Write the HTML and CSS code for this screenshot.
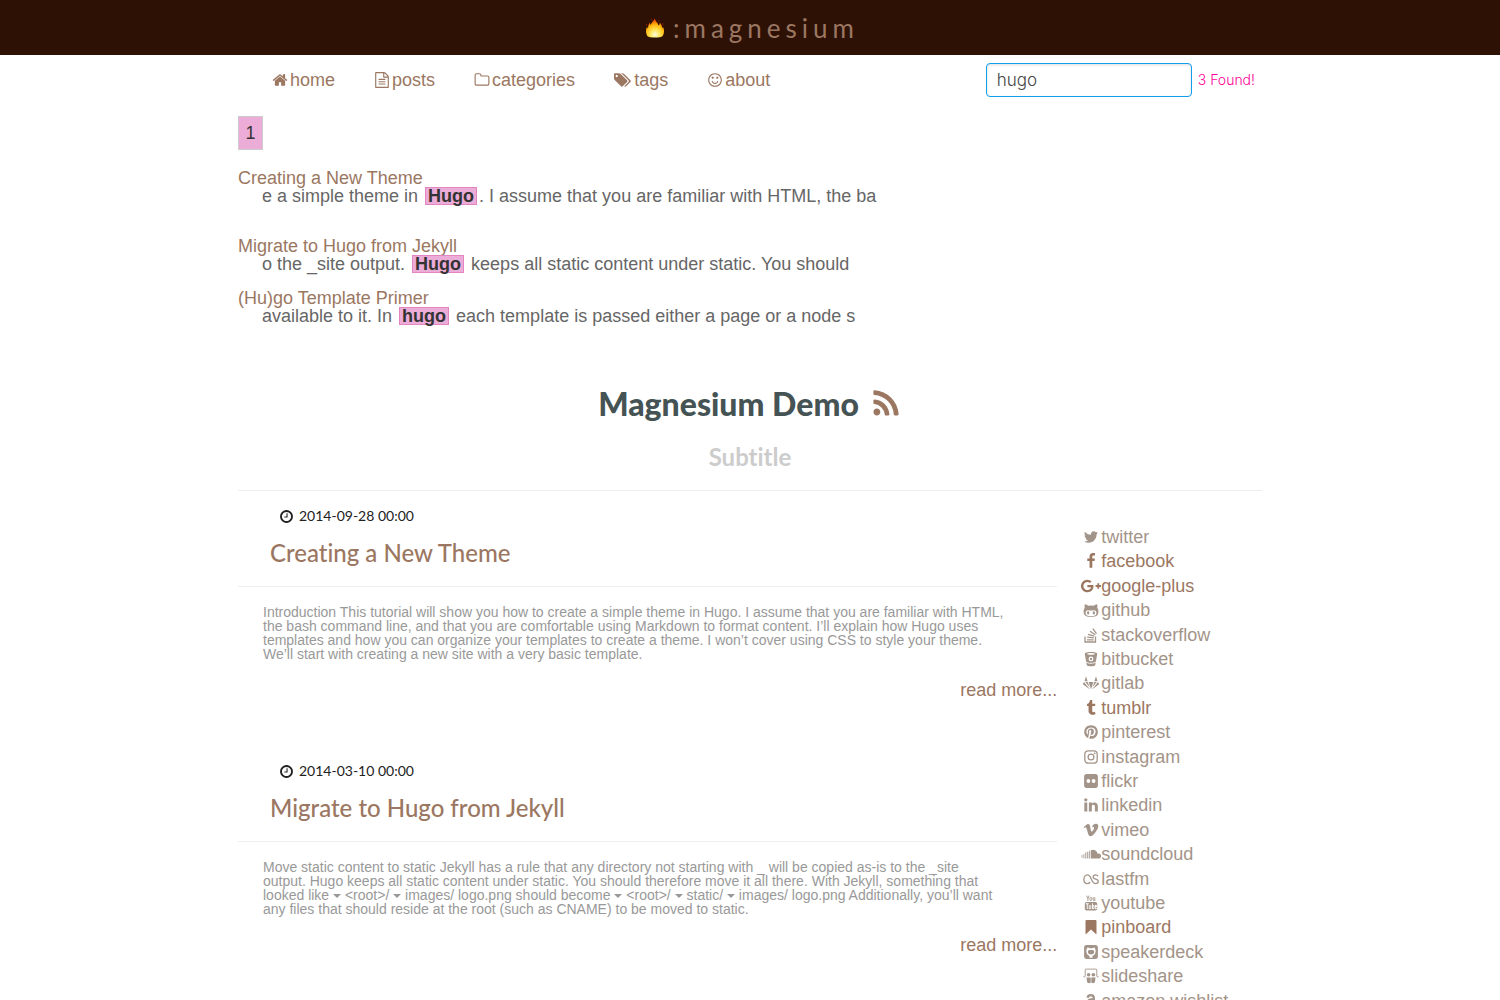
FILE: index.html
```html
<!DOCTYPE html>
<html lang="en">
<head>
<meta charset="utf-8">
<meta name="viewport" content="width=device-width, initial-scale=1">
<title>Magnesium Demo</title>
<link rel="stylesheet" href="styles.css">
</head>
<body>
<svg class="sprite" aria-hidden="true">
  <defs>
    <radialGradient id="flame-fill" cx=".5" cy=".85" r=".8">
      <stop offset="0" stop-color="#fffbe0"/><stop offset=".3" stop-color="#ffe860"/><stop offset=".65" stop-color="#ffb80a"/><stop offset="1" stop-color="#e83a00"/>
    </radialGradient>
    <symbol id="home" viewBox="0 0 1792 1792"><path d="M1472 992v480q0 26-19 45t-45 19h-384v-384h-256v384h-384q-26 0-45-19t-19-45v-480q0-1 .5-3t.5-3l575-474 575 474q1 2 1 6zm223-69l-62 74q-8 9-21 11h-3q-13 0-21-7l-692-577-692 577q-12 8-24 7-13-2-21-11l-62-74q-8-10-7-23.5t11-21.5l719-599q32-26 76-26t76 26l244 204v-195q0-14 9-23t23-9h192q14 0 23 9t9 23v408l219 182q10 8 11 21.5t-7 23.5z"/></symbol>
    <symbol id="file" viewBox="0 0 1792 1792"><path d="M1596 380q28 28 48 76t20 88v1152q0 40-28 68t-68 28h-1344q-40 0-68-28t-28-68v-1600q0-40 28-68t68-28h896q40 0 88 20t76 48zm-444-244v376h376q-10-29-22-41l-313-313q-12-12-41-22zm384 1528v-1024h-416q-40 0-68-28t-28-68v-416h-768v1536h1280zm-1024-864q0-14 9-23t23-9h704q14 0 23 9t9 23v64q0 14-9 23t-23 9h-704q-14 0-23-9t-9-23v-64zm736 224q14 0 23 9t9 23v64q0 14-9 23t-23 9h-704q-14 0-23-9t-9-23v-64q0-14 9-23t23-9h704zm0 256q14 0 23 9t9 23v64q0 14-9 23t-23 9h-704q-14 0-23-9t-9-23v-64q0-14 9-23t23-9h704z"/></symbol>
    <symbol id="folder" viewBox="0 0 1792 1792"><path d="M1600 1312v-704q0-40-28-68t-68-28h-704q-40 0-68-28t-28-68v-64q0-40-28-68t-68-28h-320q-40 0-68 28t-28 68v960q0 40 28 68t68 28h1216q40 0 68-28t28-68zm128-704v704q0 92-66 158t-158 66h-1216q-92 0-158-66t-66-158v-960q0-92 66-158t158-66h320q92 0 158 66t66 158v32h672q92 0 158 66t66 158z"/></symbol>
    <symbol id="tags" viewBox="0 0 1920 1792"><path d="M384 448q0-53-37.500-90.500t-90.500-37.500-90.500 37.500-37.500 90.500 37.500 90.500 90.500 37.500 90.500-37.500 37.500-90.500zm1067 576q0 53-37 90l-491 492q-39 37-91 37-53 0-90-37l-715-716q-38-37-64.500-101t-26.500-117v-416q0-52 38-90t90-38h416q53 0 117 26.500t102 64.500l715 714q37 39 37 91zm384 0q0 53-37 90l-491 492q-39 37-91 37-36 0-59-14t-53-45l470-470q37-37 37-90 0-52-37-91l-715-714q-38-38-102-64.500t-117-26.500h224q53 0 117 26.500t102 64.500l715 714q37 39 37 91z"/></symbol>
    <symbol id="smile" viewBox="0 0 1792 1792"><path d="M1262 1075q-37 121-138 195t-228 74-228-74-138-195q-8-25 4-48.500t38-31.500q25-8 48.500 4t31.500 38q25 80 92.500 129.500t151.500 49.500 151.500-49.500 92.500-129.500q8-26 32-38t49-4 37 31.500 4 48.500zm-494-435q0 53-37.500 90.500t-90.500 37.500-90.500-37.500-37.500-90.500 37.500-90.500 90.500-37.500 90.500 37.500 37.500 90.500zm512 0q0 53-37.500 90.500t-90.500 37.500-90.500-37.500-37.500-90.500 37.500-90.500 90.500-37.500 90.500 37.500 37.500 90.500zm256 256q0-130-51-248.500t-136.500-204-204-136.500-248.500-51-248.500 51-204 136.500-136.500 204-51 248.500 51 248.500 136.500 204 204 136.500 248.500 51 248.500-51 204-136.500 136.500-204 51-248.500zm128 0q0 209-103 385.500t-279.500 279.500-385.500 103-385.500-103-279.500-279.500-103-385.500 103-385.500 279.500-279.500 385.500-103 385.500 103 279.500 279.500 103 385.500z"/></symbol>
    <symbol id="rss" viewBox="0 0 1792 1792"><path d="M576 1344q0 80-56 136t-136 56-136-56-56-136 56-136 136-56 136 56 56 136zm512 123q2 28-17 48-18 21-47 21h-135q-25 0-43-16.500t-20-41.500q-22-229-184.500-391.500t-391.500-184.500q-25-2-41.500-20t-16.500-43v-135q0-29 21-47 17-17 43-17h5q160 13 306 80.500t259 181.500q114 113 181.500 259t80.500 306zm512 2q2 27-18 47-18 20-46 20h-143q-26 0-44.500-17.500t-19.500-42.500q-12-215-101-408.500t-231.500-336-336-231.500-408.500-102q-25-1-42.500-19.500t-17.500-43.500v-143q0-28 20-46 18-18 44-18h3q262 13 501.500 120t425.500 294q187 186 294 425.500t120 501.500z"/></symbol>
    <symbol id="clock" viewBox="0 0 1792 1792"><path d="M1024 544v448q0 14-9 23t-23 9h-320q-14 0-23-9t-9-23v-64q0-14 9-23t23-9h224v-352q0-14 9-23t23-9h64q14 0 23 9t9 23zm416 352q0-148-73-273t-198-198-273-73-273 73-198 198-73 273 73 273 198 198 273 73 273-73 198-198 73-273zm224 0q0 209-103 385.500t-279.500 279.500-385.500 103-385.500-103-279.500-279.500-103-385.500 103-385.500 279.500-279.500 385.500-103 385.500 103 279.500 279.500 103 385.500z"/></symbol>
    <symbol id="caret" viewBox="0 0 8 8"><path d="M0 2h8L4 6z"/></symbol>
    <symbol id="twitter" viewBox="0 0 1792 1792"><path d="M1684 408q-67 98-162 167 1 14 1 42 0 130-38 259.500t-115.500 248.500-184.500 210.500-258 146-323 54.500q-271 0-496-145 35 4 78 4 225 0 401-138-105-2-188-64.500t-114-159.500q33 5 61 5 43 0 85-11-112-23-185.500-111.500t-73.500-205.500v-4q68 38 146 41-66-44-105-115t-39-154q0-88 44-163 121 149 294.500 238.500t371.500 99.500q-8-38-8-74 0-134 94.500-228.500t228.500-94.500q140 0 236 102 109-21 205-78-37 115-142 178 93-10 186-50z"/></symbol>
    <symbol id="facebook" viewBox="0 0 1792 1792"><path d="M1343 12v264h-157q-86 0-116 36t-30 108v189h293l-39 296h-254v759h-306v-759h-255v-296h255v-218q0-186 104-288.500t277-102.500q147 0 228 12z"/></symbol>
    <symbol id="gplus" viewBox="0 0 2304 1792"><path d="M1437 913q0 208-87 370.500t-248 254-369 91.500q-149 0-285-58t-234-156-156-234-58-285 58-285 156-234 234-156 285-58q286 0 491 192l-199 191q-117-113-292-113-123 0-227.500 62t-165.500 168.500-61 232.500 61 232.500 165.500 168.500 227.500 62q83 0 152.500-23t114.500-57.500 78.500-78.500 49-83 21.500-74h-416v-252h692q12 63 12 122zm867-122v210h-209v209h-210v-209h-209v-210h209v-209h210v209h209z"/></symbol>
    <symbol id="github" viewBox="0 0 1792 1792"><path d="M704 1216q0 40-12.500 82t-43 76-72.500 34-72.500-34-43-76-12.500-82 12.500-82 43-76 72.500-34 72.500 34 43 76 12.500 82zm640 0q0 40-12.500 82t-43 76-72.500 34-72.500-34-43-76-12.500-82 12.500-82 43-76 72.500-34 72.500 34 43 76 12.500 82zm160 0q0-120-69-204t-187-84q-41 0-195 21-71 11-157 11t-157-11q-152-21-195-21-118 0-187 84t-69 204q0 88 32 153.500t81 103 122 60 140 29.500 149 7h168q82 0 149-7t140-29.500 122-60 81-103 32-153.500zm224-176q0 207-61 331-38 77-105.500 133t-141 86-170 47.500-171.500 22-167 4.500q-78 0-142-3t-147.500-12.500-152.500-30-137-51.500-121-81-86-115q-62-123-62-331 0-237 136-396-27-82-27-170 0-116 51-218 108 0 190 39.500t189 123.500q147-35 309-35 148 0 280 32 105-82 187-121t189-39q51 102 51 218 0 87-27 168 136 160 136 398z"/></symbol>
    <symbol id="stack" viewBox="0 0 16 16"><path fill="none" stroke="currentColor" stroke-width="1.300" d="M2 9.500V15h10.500V9.500M4 12.800h6.600M4.200 10.200l6.500.7M5 7.300l6.200 1.900M7 4.300l5.300 3.400M9.800 1.600l3.700 5"/></symbol>
    <symbol id="bitbucket" viewBox="0 0 16 16"><path fill-rule="evenodd" d="M8 1c3.500 0 6.200.7 6.200 1.700L13 10.300c-.7 1-2.600 1.500-5 1.500s-4.300-.5-5-1.500L1.800 2.700C1.800 1.700 4.500 1 8 1zm0 1.100c-2 0-4 .3-4 .8s2 .8 4 .8 4-.3 4-.8-2-.8-4-.8zm0 3.400a2.400 2.400 0 1 0 0 4.800 2.400 2.400 0 0 0 0-4.800zm0 1.200a1.200 1.200 0 1 1 0 2.400 1.200 1.200 0 0 1 0-2.400zM3.200 11.600c1.200.8 2.900 1.200 4.800 1.200s3.600-.4 4.800-1.200l-.6 2.600c-.7.700-2.200 1.100-4.200 1.100s-3.500-.4-4.200-1.100z"/></symbol>
    <symbol id="gitlab" viewBox="0 0 16 16"><path d="M3 1.200 4.600 6.200H1.500zM13 1.200l1.500 5h-3.100zM1 6.900 7 14.600.2 9.600q-.4-.4-.2-.9zM15 6.900 9 14.600l6.800-5q.4-.4.2-.9zM2.300 6.900h2.400L6.500 12.200zM13.700 6.900h-2.400L9.500 12.200zM5.600 6.900h4.800L8 14.300z"/></symbol>
    <symbol id="tumblr" viewBox="0 0 1792 1792"><path d="M1328 1329l80 237q-23 35-111 66t-177 32q-104 2-190.500-26t-142.500-74-95-106-55.500-120-16.500-118v-544h-168v-215q72-26 129-69.500t91-90 58-102 34-99 15-88.500q1-5 4.500-8.500t7.500-3.500h244v424h333v252h-334v518q0 30 6.500 56t22.500 52.500 49.500 41.500 81.500 14q78-2 134-29z"/></symbol>
    <symbol id="pinterest" viewBox="0 0 1792 1792"><path d="M1664 896q0 209-103 385.500t-279.500 279.500-385.500 103q-111 0-218-32 59-93 78-164 9-34 54-211 20 39 73 67.500t114 28.500q121 0 216-68.500t147-188.500 52-270q0-114-59.500-214t-172.500-163-255-63q-105 0-196 29t-154.500 77-109 110.500-67 129.500-21.500 134q0 104 40 183t117 111q30 12 38-20 2-7 8-31t8-30q6-23-11-43-51-61-51-151 0-151 104.500-259.500t273.500-108.500q151 0 235.500 82t84.500 213q0 170-68.500 289t-175.500 119q-61 0-98-43.500t-23-104.500q8-35 26.500-93.500t30-103 11.500-75.500q0-50-27-83t-77-33q-62 0-105 57t-43 142q0 73 25 122l-99 418q-17 70-13 177-206-91-333-281t-127-423q0-209 103-385.500t279.500-279.500 385.500-103 385.500 103 279.500 279.500 103 385.500z"/></symbol>
    <symbol id="instagram" viewBox="0 0 16 16"><rect x="1.800" y="1.800" width="12.400" height="12.400" rx="3.400" fill="none" stroke="currentColor" stroke-width="1.300"/><circle cx="8" cy="8" r="2.900" fill="none" stroke="currentColor" stroke-width="1.300"/><circle cx="11.700" cy="4.300" r=".9"/></symbol>
    <symbol id="flickr" viewBox="0 0 16 16"><path fill-rule="evenodd" d="M3.700 1.100h8.600a2.600 2.600 0 0 1 2.600 2.600v8.600a2.600 2.600 0 0 1-2.600 2.600H3.700a2.600 2.600 0 0 1-2.600-2.600V3.700a2.600 2.600 0 0 1 2.600-2.600zM5.400 6.100a1.900 1.900 0 1 0 0 3.800 1.900 1.900 0 0 0 0-3.800zm5.200 0a1.900 1.900 0 1 0 0 3.800 1.900 1.900 0 0 0 0-3.800z"/></symbol>
    <symbol id="linkedin" viewBox="0 0 1792 1792"><path d="M477 625v991h-330v-991h330zm21-306q1 73-50.500 122t-135.500 49h-2q-82 0-132-49t-50-122q0-74 51.500-122.500t134.500-48.500 133 48.500 51 122.500zm1166 729v568h-329v-530q0-105-40.500-164.500t-126.500-59.500q-63 0-105.500 34.500t-63.500 85.500q-11 30-11 81v553h-329q2-399 2-647t-1-296l-1-48h329v144h-2q20-32 41-56t56.500-52 87-43.500 114.500-15.500q171 0 275 113.500t104 332.500z"/></symbol>
    <symbol id="vimeo" viewBox="0 0 1792 1792"><path d="M1709 518q-10 236-332 651-333 431-562 431-142 0-240-263-44-160-132-482-72-262-157-262-18 0-127 76l-77-98q24-21 108-96.500t130-115.500q156-138 241-146 95-9 153 55.500t81 203.500q44 287 66 373 55 249 120 249 51 0 154-161 101-161 109-246 13-139-109-139-57 0-121 26 120-393 459-382 251 8 236 326z"/></symbol>
    <symbol id="soundcloud" viewBox="0 0 20 16"><path d="M10 4.300a4.600 4.600 0 0 1 6.600 3.400 2.500 2.500 0 1 1 .9 4.800H10z"/><path opacity=".75" d="M6 5.900q.5-.8 1.400 0v6.600H6zM8 4.900q.6-.8 1.400 0v7.600H8zM4.100 6.600q.5-.8 1.300 0v5.900H4.100z"/><path opacity=".6" d="M2.200 8.200q.5-.8 1.300 0v4.200H2.200zM.4 9.100q.5-.6 1.200 0v2.700q-.6.600-1.200 0z"/></symbol>
    <symbol id="lastfm" viewBox="0 0 16 16"><path fill="none" stroke="currentColor" stroke-width="1.300" d="M7.200 11.300C6.500 12.100 5.500 12.600 4.300 12.600 2.200 12.600.9 11 .9 8.500s1.500-4.600 3.600-4.600c4.100 0 3.700 8.700 8 8.700 1.700 0 2.800-.9 2.800-2.300 0-3.200-5.200-1.300-5.200-4.300 0-1.300 1-2.200 2.400-2.200 1.300 0 2 .5 2.500 1.500"/></symbol>
    <symbol id="youtube" viewBox="0 0 16 16"><path fill-rule="evenodd" d="M3.500 7h9a1.700 1.700 0 0 1 1.700 1.700v5a1.700 1.700 0 0 1-1.700 1.700h-9a1.700 1.700 0 0 1-1.700-1.700v-5A1.700 1.700 0 0 1 3.500 7zM2.800 8.300v.9h1v4.900h.9V9.200h1v-.9zm3 1.600v3.500q0 .8.800.8.500 0 .8-.4v.3h.8V9.900h-.8v3.400q-.7.500-.8 0V9.900zM9 8.300v5.800h.7l.1-.3q1.600.9 1.600-.7v-2q0-1.700-1.600-.9V8.300zm.9 2.600q.6-.4.600.3v1.700q0 .7-.6.300zm2 .1v2q0 1.300 1 1.300t1-1.500h-.7q0 .7-.3.7t-.2-1.400h1.200V11q0-1.200-1-1.200t-1 1.200z"/><path fill="none" stroke="currentColor" stroke-width=".9" d="m3.600.6 1.300 3 1.200-3M4.900 3.600V6M7.800 2.400q.9 0 .9.900v1.400q0 .9-.9.900t-.9-.9V3.300q0-.9.900-.9zM10.200 2.200v2.900q.2 1 1.500 0M11.800 2.200V6"/></symbol>
    <symbol id="pinboard" viewBox="0 0 16 16"><path d="M2.500 2q0-.9.900-.9h9.200q.9 0 .9.900v12.700q-.3.500-.9 0L8 10.400l-4.600 4.300q-.6.500-.9 0z"/></symbol>
    <symbol id="ghsquare" viewBox="0 0 16 16"><path fill-rule="evenodd" d="M3.700 1.100h8.600a2.600 2.600 0 0 1 2.600 2.600v8.600a2.600 2.600 0 0 1-2.600 2.600H3.700a2.600 2.600 0 0 1-2.600-2.600V3.700a2.600 2.600 0 0 1 2.600-2.600zM4.600 3.600c-1.500 1.300-1.700 4.900-.4 6.600.7.900 1.500 1.300 2.300 1.500v2h3v-2c.8-.2 1.600-.6 2.300-1.500 1.300-1.700 1.100-5.300-.4-6.600-.7 0-1.300.3-1.900.7H6.500c-.6-.4-1.200-.7-1.900-.7zM5.800 6h4.400c1.400 1.100 1.200 3.500-.2 4.100-1.200.5-2.800.5-4 0C4.600 9.500 4.400 7.100 5.800 6z"/></symbol>
    <symbol id="slideshare" viewBox="0 0 16 16"><path fill="none" stroke="currentColor" stroke-width=".9" d="M.4 8.400c.9 1 1.800.7 1.800-.2V2q0-.9.900-.9h9.800q.9 0 .9.900v6.200c0 .9.900 1.200 1.800.2"/><circle cx="5.600" cy="6.700" r="1.800"/><circle cx="10.400" cy="6.700" r="1.800"/><path d="M3.500 9.200c1.300.5 2.700.5 4.200.2v5.400c-1.500.9-3.500.4-3.700-1zm9 0c-1.300.5-2.700.5-4.200.2v5.400c1.500.9 3.500.4 3.700-1z"/></symbol>
    <symbol id="amazon" viewBox="0 0 16 16"><path fill="none" stroke="currentColor" stroke-width="2.300" d="M4.600 4.700C4.900 3 6 2.200 7.800 2.200c2 0 3 .9 3 2.800v4c0 1 .4 1.500 1 2.200M10.800 6.200C7 6.200 4.900 7 4.900 9c0 2.900 5.900 2.400 5.900-1.300"/><path d="M1 12.300c4 3 9.500 3 13 .8l.3.500c-4 3.400-10 3-13.500-.9z"/></symbol>
  </defs>
</svg>

<header class="banner">
  <a class="brand" href="#">
    <svg class="flame" viewBox="0 0 20 22" aria-hidden="true"><path fill="url(#flame-fill)" d="M9.800 1.500c.3 2.500 3.200 4.200 3.800 7 .9-.8 1.300-1.700 1.100-3 2 2 2.300 4 2.500 6 .5-.5.7-1.200.7-2 1.600 3.300 1.600 7-.4 9.700-1.500 1.700-13.400 1.700-15 0-2-2.700-1.900-6.300-.4-9.700.1.900.4 1.500.9 2 .1-2.500.6-4.300 2-6 0 1.100.3 2 .8 2.600.3-2.700 3-4.200 4-6.600z"/><path fill="#b01c00" d="M6.400 1.200q1.200.5.800 2.200l-.9-.8zM1.400 6.500q1 .4.800 2L1 8zM13.500 3q1 .3 1 1.500l-1-.2zM17.600 6q1.300.6.900 2.200l-.9-.8z"/></svg>
    <span>:magnesium</span>
  </a>
</header>

<div class="page">
  <div class="toolbar">
    <nav class="menu">
      <a href="#"><svg class="icon"><use href="#home"/></svg>home</a>
      <a href="#"><svg class="icon"><use href="#file"/></svg>posts</a>
      <a href="#"><svg class="icon"><use href="#folder"/></svg>categories</a>
      <a href="#"><svg class="icon wide"><use href="#tags"/></svg>tags</a>
      <a href="#"><svg class="icon"><use href="#smile"/></svg>about</a>
    </nav>
    <form class="search">
      <input type="text" value="hugo" aria-label="Search">
      <output>3 Found!</output>
    </form>
  </div>

  <section class="results">
    <button class="pager" type="button">1</button>
    <div class="result spaced"><a href="#">Creating a New Theme</a><p>e a simple theme in <mark>Hugo</mark>. I assume that you are familiar with HTML, the ba</p></div>
    <div class="result"><a href="#">Migrate to Hugo from Jekyll</a><p>o the _site output. <mark>Hugo</mark> keeps all static content under static. You should</p></div>
    <div class="result"><a href="#">(Hu)go Template Primer</a><p>available to it. In <mark>hugo</mark> each template is passed either a page or a node s</p></div>
  </section>

  <div class="heading">
    <h1>Magnesium Demo<a href="#" aria-label="RSS"><svg class="rss"><use href="#rss"/></svg></a></h1>
    <h2>Subtitle</h2>
  </div>

  <div class="columns">
    <main>
      <article>
        <header><time datetime="2014-09-28T00:00"><svg class="clock"><use href="#clock"/></svg>2014-09-28 00:00</time><h3><a href="#">Creating a New Theme</a></h3></header>
        <p class="summary">Introduction This tutorial will show you how to create a simple theme in Hugo. I assume that you are familiar with HTML,<br>the bash command line, and that you are comfortable using Markdown to format content. I’ll explain how Hugo uses<br>templates and how you can organize your templates to create a theme. I won’t cover using CSS to style your theme.<br>We’ll start with creating a new site with a very basic template.</p>
        <a class="more" href="#">read more...</a>
      </article>
      <article>
        <header><time datetime="2014-03-10T00:00"><svg class="clock"><use href="#clock"/></svg>2014-03-10 00:00</time><h3><a href="#">Migrate to Hugo from Jekyll</a></h3></header>
        <p class="summary">Move static content to static Jekyll has a rule that any directory not starting with _ will be copied as-is to the _site<br>output. Hugo keeps all static content under static. You should therefore move it all there. With Jekyll, something that<br>looked like <svg class="caret"><use href="#caret"/></svg> &lt;root&gt;/ <svg class="caret"><use href="#caret"/></svg> images/ logo.png should become <svg class="caret"><use href="#caret"/></svg> &lt;root&gt;/ <svg class="caret"><use href="#caret"/></svg> static/ <svg class="caret"><use href="#caret"/></svg> images/ logo.png Additionally, you’ll want<br>any files that should reside at the root (such as CNAME) to be moved to static.</p>
        <a class="more" href="#">read more...</a>
      </article>
    </main>
    <aside>
      <ul class="social">
        <li><a href="#"><svg class="icon"><use href="#twitter"/></svg>twitter</a></li>
        <li><a class="on" href="#"><svg class="icon"><use href="#facebook"/></svg>facebook</a></li>
        <li><a class="on" href="#"><svg class="icon wide"><use href="#gplus"/></svg>google-plus</a></li>
        <li><a href="#"><svg class="icon"><use href="#github"/></svg>github</a></li>
        <li><a href="#"><svg class="icon"><use href="#stack"/></svg>stackoverflow</a></li>
        <li><a href="#"><svg class="icon"><use href="#bitbucket"/></svg>bitbucket</a></li>
        <li><a href="#"><svg class="icon"><use href="#gitlab"/></svg>gitlab</a></li>
        <li><a class="on" href="#"><svg class="icon"><use href="#tumblr"/></svg>tumblr</a></li>
        <li><a href="#"><svg class="icon"><use href="#pinterest"/></svg>pinterest</a></li>
        <li><a href="#"><svg class="icon"><use href="#instagram"/></svg>instagram</a></li>
        <li><a href="#"><svg class="icon"><use href="#flickr"/></svg>flickr</a></li>
        <li><a href="#"><svg class="icon"><use href="#linkedin"/></svg>linkedin</a></li>
        <li><a href="#"><svg class="icon"><use href="#vimeo"/></svg>vimeo</a></li>
        <li><a href="#"><svg class="icon wide"><use href="#soundcloud"/></svg>soundcloud</a></li>
        <li><a href="#"><svg class="icon"><use href="#lastfm"/></svg>lastfm</a></li>
        <li><a href="#"><svg class="icon"><use href="#youtube"/></svg>youtube</a></li>
        <li><a class="on" href="#"><svg class="icon"><use href="#pinboard"/></svg>pinboard</a></li>
        <li><a href="#"><svg class="icon"><use href="#ghsquare"/></svg>speakerdeck</a></li>
        <li><a href="#"><svg class="icon"><use href="#slideshare"/></svg>slideshare</a></li>
        <li><a href="#"><svg class="icon"><use href="#amazon"/></svg>amazon wishlist</a></li>
      </ul>
    </aside>
  </div>
</div>
</body>
</html>
```
FILE: styles.css
```css
* { box-sizing: border-box; }
body {
  margin: 0;
  background: #fff;
  color: #666;
  font: 18px/18px "Liberation Sans", Arial, sans-serif;
  font-variant-ligatures: none;
}
a { color: #9b7762; text-decoration: none; }
svg { fill: currentColor; }
p, h1, h2, h3, ul { margin: 0; padding: 0; }
.sprite { position: absolute; width: 0; height: 0; }
.icon { width: 16px; height: 16px; flex: none; }
.wide { width: 20px; }

.banner { background: #2e1105; display: flex; justify-content: center; }
.brand {
  display: flex;
  align-items: center;
  gap: 8px;
  height: 55px;
  padding-left: 4px;
  font: 26px/32px Lato, sans-serif;
  letter-spacing: 5px;
}
.flame { width: 20px; height: 22px; }

.page { max-width: 1024px; margin: 0 auto; }
.toolbar { display: flex; justify-content: space-between; align-items: center; height: 50px; padding: 0 7px 0 34px; }
.menu { display: flex; gap: 39px; }
.menu a { display: flex; align-items: center; gap: 2px; }
.menu .wide { width: 18px; }
.search { display: flex; align-items: center; gap: 6px; }
.search input {
  width: 206px;
  height: 34px;
  padding: 0 10px;
  border: 1px solid #129fea;
  border-radius: 4px;
  box-shadow: inset 0 1px 3px #ddd;
  color: #444;
  font: 300 17px/20px Inter, sans-serif;
}
.search output { color: #f09; font: 300 14px/18px Inter, sans-serif; }

.results { padding-top: 11px; }
.pager {
  display: block;
  width: 25px;
  height: 34px;
  margin-bottom: 19px;
  padding: 0;
  border: 1px solid #ccc;
  background: #ecacd8;
  color: #333;
  font: 18px/18px "Liberation Sans", Arial, sans-serif;
}
.result { margin-bottom: 16px; }
.spaced { margin-bottom: 32px; }
.result p { padding-left: 24px; }
mark {
  display: inline-block;
  margin: 0 2px;
  padding: 0 2px;
  border: 1px solid #e285c2;
  background: #ecacd8;
  color: #333;
  font-weight: 700;
  line-height: 16px;
}

.heading { padding: 43px 0 17px; border-bottom: 1px solid #eee; text-align: center; font-family: Lato, sans-serif; }
h1 { color: #455354; font-size: 32px; line-height: 40px; font-weight: 900; }
h2 { margin-top: 17px; color: #ccc; font-size: 24px; line-height: 32px; font-weight: 700; }
.rss { width: 32px; height: 32px; margin-left: 11px; vertical-align: -4px; }

.columns { display: grid; grid-template-columns: 4fr 1fr; }
article { padding-bottom: 47px; }
article header { padding: 16px 32px 17px; border-bottom: 1px solid #eee; font-family: Lato, sans-serif; }
time { display: flex; align-items: center; gap: 5px; padding-left: 9px; color: #222; font-size: 14px; }
.clock { width: 15px; height: 15px; }
h3 { margin-top: 12px; font-size: 24px; line-height: 32px; font-weight: 500; }
.summary { padding: 18px 0 20px 25px; color: #999; font-size: 14px; line-height: 14px; white-space: nowrap; }
.caret { width: 8px; height: 8px; }
.more { display: block; text-align: right; }

aside { padding: 37px 0 0 26px; }
.social { display: grid; grid-auto-rows: 1fr; height: 488px; list-style: none; }
.social a { display: flex; align-items: center; gap: 2px; color: #a39489; }
.social .on { color: #9b7762; }
.social .wide { margin: 0 -2px; }
```
